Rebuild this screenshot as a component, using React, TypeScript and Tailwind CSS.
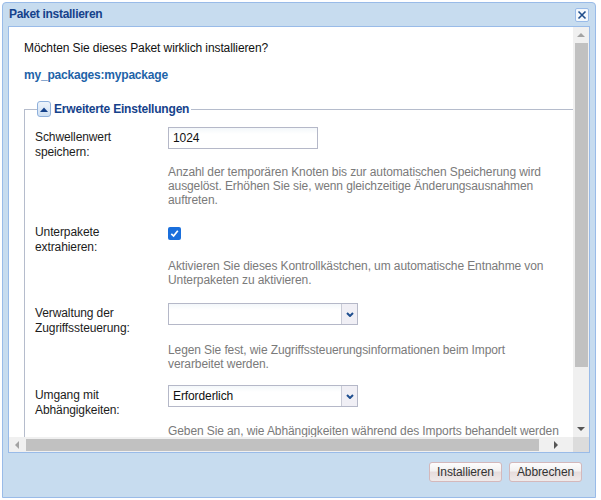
import React from 'react';

const Select = ({ value }: { value?: string }) => (
  <div className="w-[190px] h-[22px] border border-[#b5b8c8] flex">
    <div className="flex-1 pl-[4px] leading-[20px] text-[#111] bg-[linear-gradient(to_bottom,#f3f7fa,#ffffff_6px)]">{value}</div>
    <div className="w-[16px] border-l border-[#c9cbd6] bg-[#f0eff5] flex items-center justify-center">
      <svg width="8" height="5" viewBox="0 0 8 5">
        <path d="M1 1 L4 4 L7 1" stroke="#1f4f8f" strokeWidth="2" fill="none" />
      </svg>
    </div>
  </div>
);

export default function App() {
  return (
    <div className="w-[601px] h-[500px] bg-white overflow-hidden font-['Liberation_Sans',Arial,sans-serif] text-[12px] leading-[15px] tracking-[-0.1px]">
      <div className="ml-[2px] mt-[2px] w-[594px] h-[496px] border border-[#99bbe8] bg-[#c7dcef] rounded-t-[4px] px-[5px] flex flex-col">
        {/* Title bar */}
        <div className="h-[23px] shrink-0 flex items-start justify-between">
          <span className="pl-[1px] mt-[4px] font-bold text-[#15428b] tracking-[-0.3px]">Paket installieren</span>
          <div className="mt-[5px] mr-[1px] w-[14px] h-[14px] rounded-[2px] border border-[#99bbe8] bg-[#f4f8fc] flex items-center justify-center">
            <svg width="10" height="10" viewBox="0 0 10 10">
              <path d="M1.5 1.5 L8.5 8.5 M8.5 1.5 L1.5 8.5" stroke="#1f4e8c" strokeWidth="1.6" />
            </svg>
          </div>
        </div>

        {/* Body */}
        <div className="h-[427px] shrink-0 border border-[#99bbe8] bg-white grid grid-cols-[1fr_16px] grid-rows-[410px_15px]">
          <div className="overflow-hidden">
            <div className="w-[600px] pl-[15px] pt-[14px]">
              <p className="text-[#111]">Möchten Sie dieses Paket wirklich installieren?</p>
              <p className="mt-[12px] font-bold text-[#1e63a8] tracking-[-0.2px]">my_packages:mypackage</p>

              <fieldset className="mt-[18px] border border-[#b5bccc] pl-[10px] pt-[10px] pb-[20px]">
                <legend className="ml-[2px] pr-[2px] flex items-center gap-[3px]">
                  <span className="w-[14px] h-[16px] rounded-[3px] border border-[#8eb0dc] bg-[linear-gradient(to_bottom,#eef4fb,#cfe0f3)] flex items-center justify-center">
                    <svg width="8" height="5" viewBox="0 0 8 5">
                      <polygon points="0,5 4,0.5 8,5" fill="#15428b" />
                    </svg>
                  </span>
                  <span className="font-bold text-[#15428b] tracking-[-0.2px]">Erweiterte Einstellungen</span>
                </legend>

                {/* Row 1 */}
                <div className="flex">
                  <div className="w-[133px] shrink-0 pt-[3px] text-[#1c1c1c]">Schwellenwert<br />speichern:</div>
                  <div>
                    <div className="w-[150px] h-[22px] border border-[#b5b8c8] pl-[4px] leading-[20px] text-[#111] bg-[linear-gradient(to_bottom,#f3f7fa,#ffffff_6px)]">1024</div>
                    <p className="mt-[16px] leading-[14px] text-[#7a7a7a] whitespace-nowrap">
                      Anzahl der temporären Knoten bis zur automatischen Speicherung wird<br />
                      ausgelöst. Erhöhen Sie sie, wenn gleichzeitige Änderungsausnahmen<br />
                      auftreten.
                    </p>
                  </div>
                </div>

                {/* Row 2 */}
                <div className="flex mt-[18px]">
                  <div className="w-[133px] shrink-0 text-[#1c1c1c]">Unterpakete<br />extrahieren:</div>
                  <div>
                    <div className="mt-[2px] w-[13px] h-[13px] rounded-[2px] bg-[#1a6fdc] flex items-center justify-center">
                      <svg width="9" height="9" viewBox="0 0 9 9">
                        <path d="M1.3 4.8 L3.6 7 L7.8 1.8" stroke="#fff" strokeWidth="1.7" fill="none" />
                      </svg>
                    </div>
                    <p className="mt-[19px] leading-[14px] text-[#7a7a7a] whitespace-nowrap">
                      Aktivieren Sie dieses Kontrollkästchen, um automatische Entnahme von<br />
                      Unterpaketen zu aktivieren.
                    </p>
                  </div>
                </div>

                {/* Row 3 */}
                <div className="flex mt-[16px]">
                  <div className="w-[133px] shrink-0 pt-[3px] text-[#1c1c1c]">Verwaltung der<br />Zugriffssteuerung:</div>
                  <div>
                    <Select />
                    <p className="mt-[18px] leading-[14px] text-[#7a7a7a] whitespace-nowrap">
                      Legen Sie fest, wie Zugriffssteuerungsinformationen beim Import<br />
                      verarbeitet werden.
                    </p>
                  </div>
                </div>

                {/* Row 4 */}
                <div className="flex mt-[14px]">
                  <div className="w-[133px] shrink-0 pt-[3px] text-[#1c1c1c]">Umgang mit<br />Abhängigkeiten:</div>
                  <div>
                    <Select value="Erforderlich" />
                    <p className="mt-[17px] leading-[14px] text-[#7a7a7a] whitespace-nowrap">
                      Geben Sie an, wie Abhängigkeiten während des Imports behandelt werden
                    </p>
                  </div>
                </div>
              </fieldset>
            </div>
          </div>

          {/* Vertical scrollbar */}
          <div className="bg-[#f0f0f0] flex flex-col items-center">
            <div className="h-[16px] flex items-center justify-center">
              <svg width="8" height="4" viewBox="0 0 8 4"><polygon points="0,4 4,0 8,4" fill="#a3a3a3" /></svg>
            </div>
            <div className="w-[13px] h-[324px] bg-[#c1c1c1]" />
            <div className="flex-1" />
            <div className="h-[16px] flex items-center justify-center">
              <svg width="8" height="4" viewBox="0 0 8 4"><polygon points="0,0 8,0 4,4" fill="#555" /></svg>
            </div>
          </div>

          {/* Horizontal scrollbar */}
          <div className="bg-[#f0f0f0] flex items-center">
            <div className="w-[16px] h-full flex items-center justify-center">
              <svg width="4" height="8" viewBox="0 0 4 8"><polygon points="4,0 4,8 0,4" fill="#a3a3a3" /></svg>
            </div>
            <div className="ml-[1px] w-[513px] h-[12px] bg-[#c1c1c1]" />
            <div className="flex-1 h-full flex items-center justify-center">
              <svg width="4" height="8" viewBox="0 0 4 8"><polygon points="0,0 0,8 4,4" fill="#555" /></svg>
            </div>
          </div>
          <div className="bg-[#dcdcdc]" />
        </div>

        {/* Footer */}
        <div className="flex justify-end gap-[7px] pt-[9px] pr-[8px]">
          <button className="w-[73px] h-[20px] rounded-[3px] border border-[#d4b8bb] bg-[linear-gradient(to_bottom,#fdfdfd_0%,#f3f1f1_45%,#e6dcdc_50%,#efeaea_100%)] text-[#333] text-[12px] leading-[18px]">Installieren</button>
          <button className="w-[73px] h-[20px] rounded-[3px] border border-[#d4b8bb] bg-[linear-gradient(to_bottom,#fdfdfd_0%,#f3f1f1_45%,#e6dcdc_50%,#efeaea_100%)] text-[#333] text-[12px] leading-[18px]">Abbrechen</button>
        </div>
      </div>
    </div>
  );
}
